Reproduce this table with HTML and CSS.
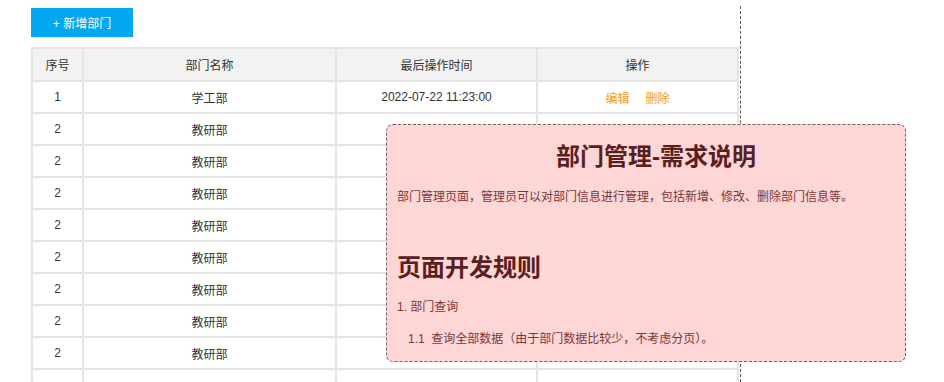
FILE: index.html
```html
<!DOCTYPE html>
<html lang="zh">
<head>
<meta charset="utf-8">
<link rel="stylesheet" href="styles.css">
</head>
<body>
<div class="page">
  <button class="add-btn">+ 新增部门</button>
  <table class="dept-table">
    <colgroup>
      <col class="c1"><col class="c2"><col class="c3"><col class="c4">
    </colgroup>
    <thead>
      <tr><th>序号</th><th>部门名称</th><th>最后操作时间</th><th>操作</th></tr>
    </thead>
    <tbody>
      <tr><td>1</td><td>学工部</td><td>2022-07-22 11:23:00</td><td><span class="link">编辑</span><span class="link">删除</span></td></tr>
      <tr><td>2</td><td>教研部</td><td></td><td></td></tr>
      <tr><td>2</td><td>教研部</td><td></td><td></td></tr>
      <tr><td>2</td><td>教研部</td><td></td><td></td></tr>
      <tr><td>2</td><td>教研部</td><td></td><td></td></tr>
      <tr><td>2</td><td>教研部</td><td></td><td></td></tr>
      <tr><td>2</td><td>教研部</td><td></td><td></td></tr>
      <tr><td>2</td><td>教研部</td><td></td><td></td></tr>
      <tr><td>2</td><td>教研部</td><td></td><td></td></tr>
      <tr><td></td><td></td><td></td><td></td></tr>
    </tbody>
  </table>
  <div class="guide-line"></div>
  <div class="note">
    <h1 class="note-title">部门管理-需求说明</h1>
    <p class="note-text">部门管理页面，管理员可以对部门信息进行管理，包括新增、修改、删除部门信息等。</p>
    <h2 class="note-sub">页面开发规则</h2>
    <p class="note-item">1. 部门查询</p>
    <p class="note-subitem">1.1&nbsp; 查询全部数据（由于部门数据比较少，不考虑分页）。</p>
  </div>
</div>
</body>
</html>
```
FILE: styles.css
```css
html, body {
  margin: 0;
  padding: 0;
  background: #fff;
  overflow: hidden;
}
body {
  font-family: Arial, "Liberation Sans", "Noto Sans CJK SC", sans-serif;
  font-size: 12px;
  color: #333;
}
.page {
  position: relative;
  width: 944px;
  height: 382px;
  overflow: hidden;
  padding: 8px 0 0 31px;
  box-sizing: border-box;
}
.add-btn {
  display: block;
  width: 102px;
  height: 29px;
  border: none;
  background: #02a7f0;
  color: #fff;
  font-family: inherit;
  font-size: 12px;
  padding: 0;
  cursor: pointer;
}
.dept-table {
  margin-top: 10px;
  border-collapse: collapse;
  width: 706px;
  table-layout: fixed;
}
.c1 { width: 51px; }
.c2 { width: 253px; }
.c3 { width: 201px; }
.c4 { width: 201px; }
.dept-table th,
.dept-table td {
  border: 2px solid #e4e4e4;
  text-align: center;
  padding: 0;
  font-weight: normal;
  color: #333;
}
.dept-table th {
  height: 31px;
  background: #f2f2f2;
}
.dept-table td {
  height: 30px;
}
.link {
  color: #f59a23;
  margin: 0 8px;
}
.guide-line {
  position: absolute;
  left: 740px;
  top: 6px;
  bottom: 0;
  border-left: 1px dashed #555;
}
.note {
  position: absolute;
  left: 386px;
  top: 124px;
  width: 520px;
  height: 238px;
  box-sizing: border-box;
  background: #ffd6d6;
  border: 1px dashed #666;
  border-radius: 7px;
  padding: 15px 10px 0 10px;
  color: #7a3636;
}
.note-title {
  margin: 0;
  padding-left: 20px;
  text-align: center;
  font-size: 24px;
  line-height: 34px;
  font-weight: bold;
  color: #5a2020;
}
.note-text {
  margin: 13px 0 0 0;
  font-size: 12px;
  line-height: 20px;
}
.note-sub {
  margin: 45px 0 0 0;
  font-size: 24px;
  line-height: 32px;
  font-weight: bold;
  color: #5a2020;
}
.note-item {
  margin: 13px 0 0 0;
  font-size: 12px;
  line-height: 20px;
}
.note-subitem {
  margin: 12px 0 0 11px;
  font-size: 12px;
  line-height: 20px;
}
```
